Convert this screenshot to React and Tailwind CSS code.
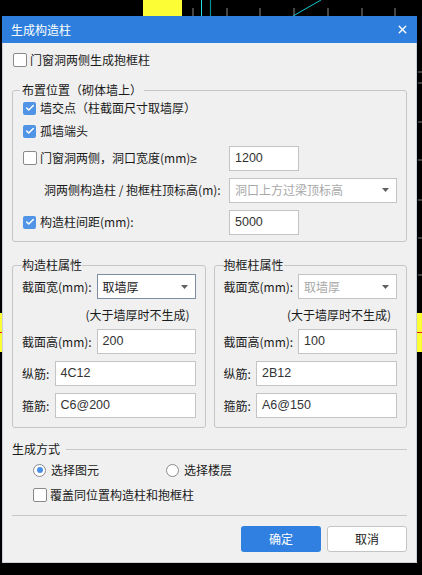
import { Check, X } from 'lucide-react'

function Backdrop() {
  const ticks = [193, 227, 260, 294, 328, 362, 395]
  const sideTicks = [72, 83, 122, 160, 200, 238, 275]
  return (
    <svg className="absolute inset-0" width="422" height="575" viewBox="0 0 422 575">
      <rect x="143" y="0" width="39" height="16" fill="#fdfd35" />
      {ticks.map((x) => (
        <line key={x} x1={x} y1="8" x2={x} y2="16" stroke="#8a8a8a" strokeWidth="1" />
      ))}
      <line x1="201.5" y1="0" x2="201.5" y2="16" stroke="#22e0e8" strokeWidth="1" />
      <line x1="210.5" y1="0" x2="210.5" y2="16" stroke="#009090" strokeWidth="1.2" />
      <line x1="293" y1="16" x2="321" y2="0" stroke="#10c8d0" strokeWidth="1" />
      {sideTicks.map((y) => (
        <line key={y} x1="418" y1={y} x2="422" y2={y} stroke="#7a7a7a" strokeWidth="1" />
      ))}
      <rect x="417" y="313" width="5" height="39" fill="#fdfd35" />
      <rect x="0" y="313" width="3" height="39" fill="#fdfd35" />
      <line x1="0" y1="332.5" x2="3" y2="332.5" stroke="#e02020" />
      <line x1="417" y1="332.5" x2="422" y2="332.5" stroke="#e02020" />
    </svg>
  )
}

function CheckBox({ checked }) {
  if (checked) {
    return (
      <span className="w-[13px] h-[13px] rounded-[2px] bg-[#5094e6] flex items-center justify-center flex-shrink-0">
        <Check className="w-[10px] h-[10px] text-white" strokeWidth={3.5} />
      </span>
    )
  }
  return <span className="w-[14px] h-[14px] rounded-[2px] bg-white border border-[#8a8a8a] flex-shrink-0" />
}

function Radio({ checked }) {
  return (
    <span className="w-[13px] h-[13px] rounded-full bg-white border border-[#8a8a8a] flex items-center justify-center flex-shrink-0">
      {checked && <span className="w-[6px] h-[6px] rounded-full bg-[#4a8fe6]" />}
    </span>
  )
}

function Field({ value, className }) {
  return (
    <div className={`h-[25px] bg-white border border-[#c4c4c4] flex items-center pl-[5px] text-[#333] font-['Liberation_Sans',sans-serif] text-[12.5px] ${className}`}>
      {value}
    </div>
  )
}

function Caret() {
  return (
    <svg width="7" height="4" viewBox="0 0 7 4" className="flex-shrink-0">
      <path d="M0 0 L7 0 L3.5 4 Z" fill="#606060" />
    </svg>
  )
}

function Select({ value, disabled, focused, className }) {
  const border = focused ? 'border-[#7d8ea3]' : 'border-[#c4c4c4]'
  const color = disabled ? 'text-[#a8a8a8]' : 'text-[#1a1a1a]'
  return (
    <div className={`h-[25px] bg-white border ${border} ${color} flex items-center justify-between pl-[5px] pr-[7px] ${className}`}>
      <span>{value}</span>
      <Caret />
    </div>
  )
}

function PropGroup({ title, widthDisabled, height, main, stirrup }) {
  return (
    <fieldset className="flex-1 border border-[#c6c6c6] rounded-[3px] px-[9px] pb-[9px]">
      <legend className="px-0 leading-[16px]">{title}</legend>
      <div className="flex items-center justify-between mt-[1px] h-[25px]">
        <span>截面宽(mm):</span>
        <Select value="取墙厚" disabled={widthDisabled} focused={!widthDisabled} className="w-[99px]" />
      </div>
      <div className="mt-[8px] h-[16px] leading-[16px] text-right pr-[6px]">(大于墙厚时不生成)</div>
      <div className="flex items-center justify-between mt-[6px]">
        <span>截面高(mm):</span>
        <Field value={height} className="w-[99px]" />
      </div>
      <div className="flex items-center justify-between mt-[7px]">
        <span>纵筋:</span>
        <Field value={main} className="w-[141px]" />
      </div>
      <div className="flex items-center justify-between mt-[7px]">
        <span>箍筋:</span>
        <Field value={stirrup} className="w-[141px]" />
      </div>
    </fieldset>
  )
}

export default function App() {
  return (
    <div className="relative w-[422px] h-[575px] bg-black overflow-hidden font-['Noto_Sans_CJK_SC',sans-serif] text-[12px] text-[#1a1a1a]">
      <Backdrop />
      <div className="relative ml-[2px] mt-[16px] w-[415px] h-[547px] bg-[#f0f0f0] border border-[#c9d0d8] border-t-0 flex flex-col">
        {/* title bar */}
        <div className="h-[27px] bg-[#2e7fdd] flex items-center justify-between pl-[9px] pr-[8px] -mx-px">
          <span className="text-white text-[12px]">生成构造柱</span>
          <X className="w-[13px] h-[13px] text-white" strokeWidth={2.6} />
        </div>

        <div className="pl-[9px] pr-[9px] pt-[7px] flex flex-col">
          <div className="flex items-center gap-[3px] h-[20px] pl-[1px]">
            <CheckBox />
            <span>门窗洞两侧生成抱框柱</span>
          </div>

          <fieldset className="mt-[12px] border border-[#c6c6c6] rounded-[3px] pl-[10px] pr-[9px] pb-[6px]">
            <legend className="-ml-[3px] px-[2px] leading-[16px]">布置位置（砌体墙上）</legend>
            <div className="flex items-center gap-[4px] h-[20px]">
              <CheckBox checked />
              <span>墙交点（柱截面尺寸取墙厚）</span>
            </div>
            <div className="flex items-center gap-[4px] h-[20px] mt-[3px]">
              <CheckBox checked />
              <span>孤墙端头</span>
            </div>
            <div className="flex items-center h-[26px] mt-[4px]">
              <div className="flex items-center gap-[3px] w-[206px]">
                <CheckBox />
                <span>
                  门窗洞两侧，洞口宽度(mm)<span className="font-['Liberation_Sans',sans-serif]">≥</span>
                </span>
              </div>
              <Field value="1200" className="w-[70px]" />
            </div>
            <div className="flex items-center h-[26px] mt-[6px]">
              <span className="w-[206px] pl-[21px]">洞两侧构造柱 / 抱框柱顶标高(m):</span>
              <Select value="洞口上方过梁顶标高" disabled className="w-[168px]" />
            </div>
            <div className="flex items-center h-[26px] mt-[6px]">
              <div className="flex items-center gap-[4px] w-[206px]">
                <CheckBox checked />
                <span>构造柱间距(mm):</span>
              </div>
              <Field value="5000" className="w-[70px]" />
            </div>
          </fieldset>

          <div className="flex gap-[8px] mt-[15px]">
            <PropGroup title="构造柱属性" height="200" main="4C12" stirrup="C6@200" />
            <PropGroup title="抱框柱属性" widthDisabled height="100" main="2B12" stirrup="A6@150" />
          </div>

          <div className="flex items-center gap-[6px] mt-[13px] h-[16px]">
            <span>生成方式</span>
            <div className="flex-1 h-px bg-[#c8c8c8]" />
          </div>
          <div className="flex items-center h-[16px] mt-[5px] pl-[21px]">
            <div className="flex items-center gap-[5px] w-[133px]">
              <Radio checked />
              <span>选择图元</span>
            </div>
            <div className="flex items-center gap-[5px]">
              <Radio />
              <span>选择楼层</span>
            </div>
          </div>
          <div className="flex items-center gap-[3px] h-[16px] mt-[9px] pl-[21px]">
            <CheckBox />
            <span>覆盖同位置构造柱和抱框柱</span>
          </div>

          <div className="h-px bg-[#c8c8c8] mt-[12px]" />

          <div className="flex justify-end gap-[6px] mt-[10px]">
            <button className="w-[80px] h-[26px] rounded-[3px] bg-[#2f80e0] text-white text-[12px]">确定</button>
            <button className="w-[80px] h-[26px] rounded-[3px] bg-white border border-[#c4c4c4] text-[#1a1a1a] text-[12px]">取消</button>
          </div>
        </div>
      </div>
    </div>
  )
}
